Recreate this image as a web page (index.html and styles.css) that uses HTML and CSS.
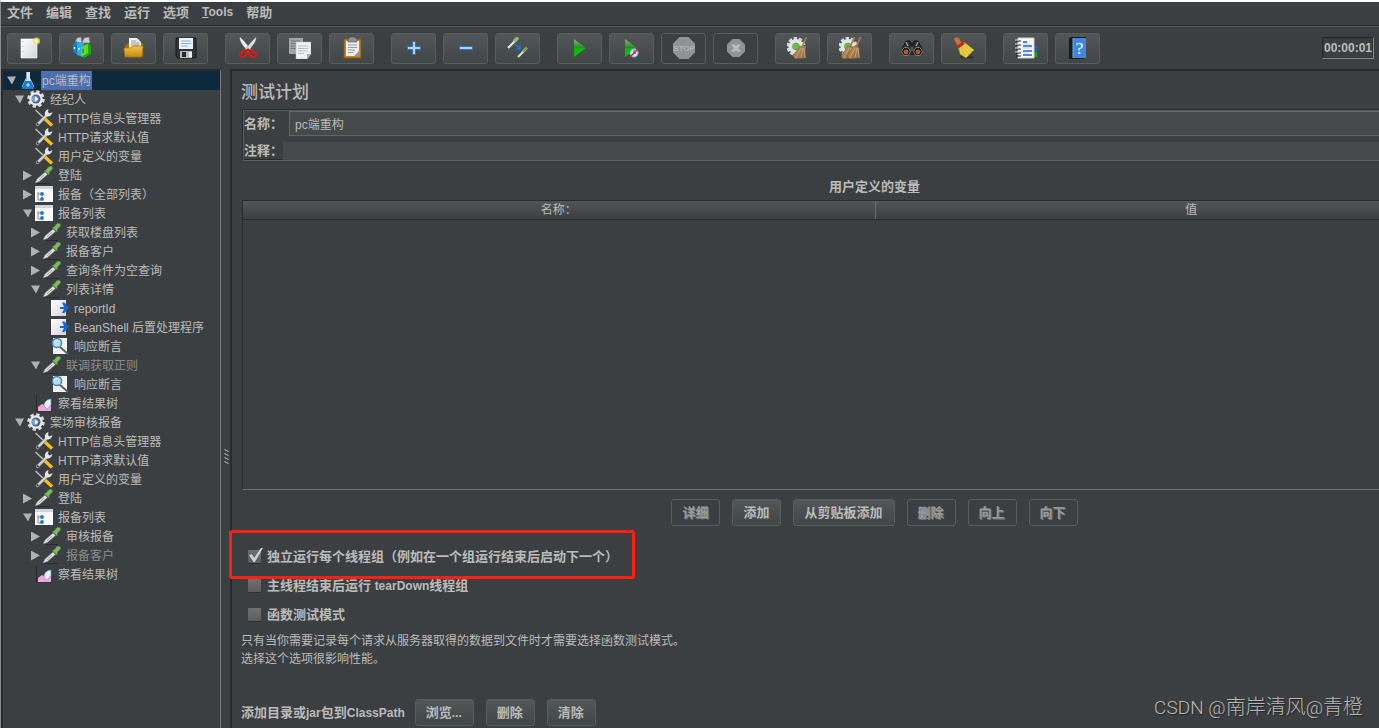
FILE: index.html
```html
<!DOCTYPE html>
<html lang="zh-CN">
<head>
<meta charset="utf-8">
<title>pc端重构</title>
<link rel="stylesheet" href="styles.css">
</head>
<body>
<svg class="defs" aria-hidden="true">
  <defs>
    <linearGradient id="gGreen" x1="0" y1="0" x2="0" y2="1"><stop offset="0" stop-color="#6cc468"/><stop offset=".48" stop-color="#2a8a2a"/><stop offset=".52" stop-color="#08b408"/><stop offset="1" stop-color="#05c805"/></linearGradient>
    <linearGradient id="gPaper" x1="0" y1="0" x2="1" y2="1"><stop offset="0" stop-color="#fff"/><stop offset="1" stop-color="#d4d4d4"/></linearGradient>
    <linearGradient id="gFolder" x1="0" y1="0" x2="0" y2="1"><stop offset="0" stop-color="#f3c04e"/><stop offset="1" stop-color="#c98b0c"/></linearGradient>
    <linearGradient id="gBroom" x1="0" y1="0" x2="1" y2="1"><stop offset="0" stop-color="#c39a6a"/><stop offset="1" stop-color="#8a6236"/></linearGradient>

    <symbol id="t-new" viewBox="0 0 22 22"><path d="M2 2h16v19H2z" fill="url(#gPaper)" stroke="#fff" stroke-width=".6"/><path d="M4 4v15" stroke="#bbb" stroke-dasharray="1 4"/><circle cx="17.500" cy="4" r="3.500" fill="#f4e56a" opacity=".8"/><circle cx="17.500" cy="4" r="1.400" fill="#fffbd0"/></symbol>
    <symbol id="t-templates" viewBox="0 0 22 22"><path d="M4 5l2-4 4-1 1 6zM11 6l2-5 5-1 1 6z" fill="#c9cdd0" stroke="#777" stroke-width=".6"/><path d="M2 6l4-2v14l-4-3z" fill="#0d7fc0"/><path d="M6 5l7 1v14l-7-2z" fill="#2ba9ea"/><path d="M3.500 10v2M8 11v2" stroke="#e4f6ff" stroke-width="1.500"/><path d="M10 10l7-4 3 3v8l-7 4-3-2z" fill="#23a512"/><path d="M10 10l7-3v9l-7 4z" fill="#5cdb2b"/><path d="M12 12v4" stroke="#137a0a"/></symbol>
    <symbol id="t-open" viewBox="0 0 22 22"><path d="M2 9l3-3h15v13H2z" fill="#a56f08"/><path d="M6 1h8l4 4v10H6z" fill="url(#gPaper)"/><path d="M8 4h5M8 6h8M8 8h8" stroke="#888" stroke-width=".8"/><path d="M1 11h6l3-2h10l-1 11H2z" fill="url(#gFolder)" stroke="#a97208" stroke-width=".7"/></symbol>
    <symbol id="t-save" viewBox="0 0 22 22"><path d="M1 1h20v20H3l-2-2z" fill="#30343a" stroke="#161719"/><path d="M4 1h14v11H4z" fill="#eaf3fc"/><path d="M6 4h10M6 6.500h10M6 9h7" stroke="#8eb0d4"/><path d="M5 14h12v7H5z" fill="#b9bcc0"/><path d="M7 15h4v5H7z" fill="#26282b"/><path d="M14 15h3v5h-3z" fill="#eee"/></symbol>
    <symbol id="t-cut" viewBox="0 0 22 22"><path d="M3 0c-1 5 4 9 8 15l3-2C11 8 7 4 3 0z" fill="#f2f2f2" stroke="#888" stroke-width=".5"/><path d="M19 0c1 5-4 9-8 15l-3-2c3-5 7-9 11-13z" fill="#dcdcdc" stroke="#777" stroke-width=".5"/><ellipse cx="6.500" cy="17" rx="3.800" ry="2.600" fill="none" stroke="#dc1919" stroke-width="2.200" transform="rotate(-35 6.500 17)"/><ellipse cx="15.500" cy="17" rx="3.800" ry="2.600" fill="none" stroke="#dc1919" stroke-width="2.200" transform="rotate(35 15.500 17)"/><path d="M8 14.500l3-2 3 2" stroke="#c31212" stroke-width="2" fill="none"/></symbol>
    <symbol id="t-copy" viewBox="0 0 22 22"><path d="M0 1h14v16H0z" fill="#a2a5a6"/><path d="M2 4h9M2 6.500h9M2 9h7M2 11.500h7" stroke="#777"/><path d="M7 5h15v12l-4 5H7z" fill="#f1f1f1" stroke="#bbb" stroke-width=".5"/><path d="M9 9h10M9 11.500h10M9 14h10M9 16.500h6" stroke="#bbb"/><path d="M22 17h-4v5z" fill="#aaa"/></symbol>
    <symbol id="t-paste" viewBox="0 0 22 22"><path d="M3 2h17v19H3z" fill="#cc8419" stroke="#8a520a"/><path d="M5 4h13v15H5z" fill="#eee"/><path d="M18 14l-5 5h5z" fill="#999"/><path d="M7 8h9M7 10.500h9M7 13h7M7 15.500h5" stroke="#999"/><path d="M7 2l3-2h3l3 2v3H7z" fill="#8c9092" stroke="#555" stroke-width=".6"/></symbol>
    <symbol id="t-plus" viewBox="0 0 22 22"><path d="M9.500 4.500h3v5h5v3h-5v5h-3v-5h-5v-3h5z" fill="#b3d4f6" stroke="#2f6fc5"/></symbol>
    <symbol id="t-minus" viewBox="0 0 22 22"><path d="M4.500 9.500h13v3h-13z" fill="#b3d4f6" stroke="#2f6fc5"/></symbol>
    <symbol id="t-toggle" viewBox="0 0 22 22"><path d="M1 11l8-8" stroke="#e4e8e2" stroke-width="2.200"/><path d="M7 4.500l4-4" stroke="#8cc46c" stroke-width="3.400"/><path d="M11 20l7-7" stroke="#d7dbd5" stroke-width="2.200"/><path d="M16 14.500l4-4" stroke="#74aa56" stroke-width="3"/><path d="M8 7l5 5m0-4v4H9" stroke="#2671d8" stroke-width="1.600" fill="none"/></symbol>
    <symbol id="t-start" viewBox="0 0 22 22"><path d="M5 2l12 9L5 20z" fill="url(#gGreen)"/></symbol>
    <symbol id="t-notimers" viewBox="0 0 22 22"><path d="M4 2l12 9-12 9z" fill="url(#gGreen)"/><circle cx="13" cy="16" r="4.200" fill="#dbe8f7" stroke="#5795d4"/><path d="M13 13v3h2" stroke="#355" fill="none"/><path d="M8.500 20.500l9-9" stroke="#d8201c" stroke-width="1.500"/></symbol>
    <symbol id="t-stop" viewBox="0 0 22 22"><path d="M6.500 0h9L22 6.500v9L15.500 22h-9L0 15.500v-9z" fill="#929292"/><text x="11" y="14" text-anchor="middle" class="stop-text">STOP</text></symbol>
    <symbol id="t-shutdown" viewBox="0 0 22 22"><path d="M7.500 2h7l5.500 5.500v7L14.500 20h-7L2 14.500v-7z" fill="#929292"/><path d="M7.500 7.500l7 7m0-7l-7 7" stroke="#bbb" stroke-width="3"/></symbol>
    <symbol id="gear-green" viewBox="0 0 22 22"><circle cx="10" cy="9.500" r="8.200" fill="none" stroke="#d8d9d9" stroke-width="2.800" stroke-dasharray="3.400 1.750"/><circle cx="10" cy="9.500" r="7.600" fill="#e3e4e4"/><circle cx="10" cy="9.500" r="3.400" fill="#68c135" stroke="#89908a"/></symbol>
    <symbol id="broom" viewBox="0 0 22 22"><path d="M19.500 0l-4 9" stroke="#a37b4e" stroke-width="1.700"/><path d="M13 9l5 1 1 11-11 1-2-3z" fill="url(#gBroom)" stroke="#735029" stroke-width=".5"/><path d="M14 11l-5 10M16 11l-2 10M17 11l1 10" stroke="#dfbd8c" stroke-width=".6"/></symbol>
    <symbol id="t-clear" viewBox="0 0 22 22"><use href="#gear-green" x="-1" width="22" height="22"/><use href="#broom" width="22" height="22"/></symbol>
    <symbol id="t-clearall" viewBox="0 0 22 22"><use href="#gear-green" x="-1" width="22" height="22"/><use href="#broom" x="-4" width="22" height="22"/><use href="#broom" x="2" width="22" height="22"/></symbol>
    <symbol id="t-search" viewBox="0 0 22 22"><path d="M5 4h4l2 4 2-4h4l4 8v5H1v-5z" fill="#292b2c" stroke="#111"/><path d="M5 5l2 4M17 5l-2 4" stroke="#a5a7a8" stroke-width="1.300"/><circle cx="5" cy="14.500" r="4.200" fill="#191919" stroke="#888"/><circle cx="17" cy="14.500" r="4.200" fill="#191919" stroke="#888"/><circle cx="5" cy="15" r="2.400" fill="#ad5b26"/><circle cx="17" cy="15" r="2.400" fill="#ad5b26"/><path d="M9.500 10h3v4h-3z" fill="#555"/></symbol>
    <symbol id="t-reset" viewBox="0 0 22 22"><ellipse cx="14" cy="20" rx="7" ry="1.800" fill="#272a2a" opacity=".7"/><path d="M1 2l2-2 3 1 3 5-4 3-3-4z" fill="#b77a3a" stroke="#805020" stroke-width=".5"/><path d="M5 9l6-4 10 8-8 8-6-4z" fill="#ecd044" stroke="#a98812" stroke-width=".6"/><path d="M8 11l4 8M10 10l6 8M12 9l7 6" stroke="#c3a82c" stroke-width=".7"/><path d="M3.500 9.500l6-5 2.500 2-6 5z" fill="#cf2424"/></symbol>
    <symbol id="t-fn" viewBox="0 0 22 22"><path d="M18 9h4v5h-4z" fill="#1a67ca"/><path d="M18 15h4v5h-4z" fill="#1ba31b"/><path d="M3 1h16v20H3z" fill="#fafafa" stroke="#ccc"/><path d="M1 4h5M1 8h5M1 12h5M1 16h5M1 19h5" stroke="#111"/><path d="M0 3h4M0 7h4M0 11h4M0 15h4" stroke="#ddd"/><path d="M8 5h4M8 9h9M8 14h9M8 18h9" stroke="#2563b9" stroke-width="1.300"/><path d="M8 7h7M8 11h9M8 16h6" stroke="#b9cfeb"/></symbol>
    <symbol id="t-help" viewBox="0 0 22 22"><path d="M2 1l3-1h14v20l-3 2H2z" fill="#17191b"/><path d="M6 1h13v20H6z" fill="#4287de"/><path d="M6 1v20" stroke="#72a9ed"/><text x="12.500" y="17" text-anchor="middle" class="help-text">?</text></symbol>

    <symbol id="i-plan" viewBox="0 0 18 18"><path d="M7 1h4v6l4 8v3H3v-3l4-8z" fill="#dbe5ee"/><path d="M7 1h1v7l-3 6H4l3-7z" fill="#96a8b5"/><path d="M6 10h6l3 6v2H3v-2z" fill="#1779d1"/><circle cx="9" cy="14" r="1.700" fill="#9ed4fb"/></symbol>
    <symbol id="i-group" viewBox="0 0 18 18"><circle cx="9" cy="9" r="7.300" fill="none" stroke="#d9d9d9" stroke-width="3" stroke-dasharray="3.300 2.430"/><circle cx="9" cy="9" r="6.800" fill="#e9e9e9"/><circle cx="9" cy="9" r="4.500" fill="#446797"/><circle cx="8" cy="9" r="3" fill="#84a6d1"/><path d="M8 6.500l3.500 2.500L8 11.500z" fill="#fff"/></symbol>
    <symbol id="i-config" viewBox="0 0 18 18"><path d="M.5 1l9 8.500" stroke="#bfc1c1" stroke-width="1.400"/><path d="M2.500 15.500L12 6" stroke="#77797a" stroke-width="3.600" stroke-linecap="round"/><path d="M2.500 15.500L13 5" stroke="#d5d7d7" stroke-width="2" stroke-linecap="round"/><path d="M13.500 0c-3 1-4.500 4-3 6.500 2 2 6 1 7-3.500l-3 1.500L13 3z" fill="#e3e4e4"/><path d="M10 10l7 6.500" stroke="#f5bd1c" stroke-width="3.200"/><circle cx="2.800" cy="15.200" r="1" fill="#333"/></symbol>
    <symbol id="i-sampler" viewBox="0 0 18 18"><path d="M2 17.500h13" stroke="#292b2c"/><path d="M0 17l2-4 8-7 2.500 2.500-8 7z" fill="#dcdfdb" stroke="#777d74" stroke-width=".5"/><path d="M4 14l5-5" stroke="#969b93" stroke-width=".8"/><path d="M9 4.500l2-.5 2-2.500c2-2.500 6.500-1 4 2L14.500 6l-.5 3z" fill="#7abb60" stroke="#467d35" stroke-width=".5"/></symbol>
    <symbol id="i-controller" viewBox="0 0 18 18"><path d="M0 1h18v16H0z" fill="#fafafa"/><path d="M0 1h18v3H0z" fill="#cfd5db"/><path d="M3 7v8h3M3 9h3" stroke="#778596" fill="none"/><circle cx="7" cy="9" r="1.900" fill="#2970be"/><circle cx="7" cy="14" r="1.900" fill="#2970be"/></symbol>
    <symbol id="i-post" viewBox="0 0 18 18"><path d="M0 1h15v16H0z" fill="url(#gPaper)"/><path d="M9 8h4l-2-4.500h2.500L18 8.500 13.500 14H11l2-4H9z" fill="#1565cd"/></symbol>
    <symbol id="i-assert" viewBox="0 0 18 18"><path d="M2 1h14v16H2z" fill="#f1f3f4"/><path d="M9 10l8 7" stroke="#5c6266" stroke-width="2"/><circle cx="6" cy="6" r="4.600" fill="#b7ddf5" stroke="#4685ba" stroke-width="1.500"/><path d="M3.500 6c0-2 1.500-2.500 3-2.500" stroke="#eefaff" fill="none"/></symbol>
    <symbol id="i-listener" viewBox="0 0 18 18"><path d="M1.500 1v16H17" stroke="#27292a" fill="none"/><path d="M3 17v-4l4-3 4 2 5-2v7z" fill="#f3a6de"/><path d="M9 12c0-4 3-7 7-7v6c-2 0-2 4-4 4z" fill="#e8f0fa" stroke="#5f91cf" stroke-width=".6"/></symbol>
  </defs>
</svg>

<nav class="menu">
  <button>文件</button><button>编辑</button><button>查找</button><button>运行</button><button>选项</button><button class="latin"><u>T</u>ools</button><button>帮助</button>
</nav>

<header class="toolbar">
  <div class="group">
    <button aria-label="新建"><svg><use href="#t-new"/></svg></button>
    <button aria-label="模板"><svg><use href="#t-templates"/></svg></button>
    <button aria-label="打开"><svg><use href="#t-open"/></svg></button>
    <button aria-label="保存"><svg><use href="#t-save"/></svg></button>
  </div>
  <div class="group">
    <button aria-label="剪切"><svg><use href="#t-cut"/></svg></button>
    <button aria-label="复制"><svg><use href="#t-copy"/></svg></button>
    <button aria-label="粘贴"><svg><use href="#t-paste"/></svg></button>
  </div>
  <div class="group">
    <button aria-label="展开"><svg><use href="#t-plus"/></svg></button>
    <button aria-label="折叠"><svg><use href="#t-minus"/></svg></button>
    <button aria-label="切换"><svg><use href="#t-toggle"/></svg></button>
  </div>
  <div class="group">
    <button aria-label="启动"><svg><use href="#t-start"/></svg></button>
    <button aria-label="不停顿开始"><svg><use href="#t-notimers"/></svg></button>
    <button aria-label="停止" disabled><svg><use href="#t-stop"/></svg></button>
    <button aria-label="关闭" disabled><svg><use href="#t-shutdown"/></svg></button>
  </div>
  <div class="group">
    <button aria-label="清除"><svg><use href="#t-clear"/></svg></button>
    <button aria-label="清除全部"><svg><use href="#t-clearall"/></svg></button>
  </div>
  <div class="group">
    <button aria-label="查找"><svg><use href="#t-search"/></svg></button>
    <button aria-label="重置搜索"><svg><use href="#t-reset"/></svg></button>
  </div>
  <div class="group">
    <button aria-label="函数助手"><svg><use href="#t-fn"/></svg></button>
    <button aria-label="帮助"><svg><use href="#t-help"/></svg></button>
  </div>
  <output class="timer">00:00:01</output>
</header>

<div class="workspace">
  <aside class="sidebar">
    <ul class="tree">
      <li><div class="row selected"><i class="arrow open"></i><svg><use href="#i-plan"/></svg><span>pc端重构</span></div>
        <ul>
          <li><div class="row"><i class="arrow open"></i><svg><use href="#i-group"/></svg><span>经纪人</span></div>
            <ul>
              <li><div class="row"><i class="arrow leaf"></i><svg><use href="#i-config"/></svg><span>HTTP信息头管理器</span></div></li>
              <li><div class="row"><i class="arrow leaf"></i><svg><use href="#i-config"/></svg><span>HTTP请求默认值</span></div></li>
              <li><div class="row"><i class="arrow leaf"></i><svg><use href="#i-config"/></svg><span>用户定义的变量</span></div></li>
              <li><div class="row"><i class="arrow"></i><svg><use href="#i-sampler"/></svg><span>登陆</span></div></li>
              <li><div class="row"><i class="arrow"></i><svg><use href="#i-controller"/></svg><span>报备（全部列表）</span></div></li>
              <li><div class="row"><i class="arrow open"></i><svg><use href="#i-controller"/></svg><span>报备列表</span></div>
                <ul>
                  <li><div class="row"><i class="arrow"></i><svg><use href="#i-sampler"/></svg><span>获取楼盘列表</span></div></li>
                  <li><div class="row"><i class="arrow"></i><svg><use href="#i-sampler"/></svg><span>报备客户</span></div></li>
                  <li><div class="row"><i class="arrow"></i><svg><use href="#i-sampler"/></svg><span>查询条件为空查询</span></div></li>
                  <li><div class="row"><i class="arrow open"></i><svg><use href="#i-sampler"/></svg><span>列表详情</span></div>
                    <ul>
                      <li><div class="row"><i class="arrow leaf"></i><svg><use href="#i-post"/></svg><span>reportId</span></div></li>
                      <li><div class="row"><i class="arrow leaf"></i><svg><use href="#i-post"/></svg><span>BeanShell 后置处理程序</span></div></li>
                      <li><div class="row"><i class="arrow leaf"></i><svg><use href="#i-assert"/></svg><span>响应断言</span></div></li>
                    </ul>
                  </li>
                  <li><div class="row off"><i class="arrow open"></i><svg><use href="#i-sampler"/></svg><span>联调获取正则</span></div>
                    <ul>
                      <li><div class="row"><i class="arrow leaf"></i><svg><use href="#i-assert"/></svg><span>响应断言</span></div></li>
                    </ul>
                  </li>
                </ul>
              </li>
              <li><div class="row"><i class="arrow leaf"></i><svg><use href="#i-listener"/></svg><span>察看结果树</span></div></li>
            </ul>
          </li>
          <li><div class="row"><i class="arrow open"></i><svg><use href="#i-group"/></svg><span>案场审核报备</span></div>
            <ul>
              <li><div class="row"><i class="arrow leaf"></i><svg><use href="#i-config"/></svg><span>HTTP信息头管理器</span></div></li>
              <li><div class="row"><i class="arrow leaf"></i><svg><use href="#i-config"/></svg><span>HTTP请求默认值</span></div></li>
              <li><div class="row"><i class="arrow leaf"></i><svg><use href="#i-config"/></svg><span>用户定义的变量</span></div></li>
              <li><div class="row"><i class="arrow"></i><svg><use href="#i-sampler"/></svg><span>登陆</span></div></li>
              <li><div class="row"><i class="arrow open"></i><svg><use href="#i-controller"/></svg><span>报备列表</span></div>
                <ul>
                  <li><div class="row"><i class="arrow"></i><svg><use href="#i-sampler"/></svg><span>审核报备</span></div></li>
                  <li><div class="row off"><i class="arrow"></i><svg><use href="#i-sampler"/></svg><span>报备客户</span></div></li>
                </ul>
              </li>
              <li><div class="row"><i class="arrow leaf"></i><svg><use href="#i-listener"/></svg><span>察看结果树</span></div></li>
            </ul>
          </li>
        </ul>
      </li>
    </ul>
  </aside>

  <div class="splitter"><svg class="grip" viewBox="0 0 5 16"><path d="M1 0v16M3 1v16" stroke="#d0d0d0" stroke-dasharray="1 3"/><path d="M2 1v15M4 2v14" stroke="#d0d0d0" stroke-dasharray="1 3"/></svg></div>

  <main class="content">
    <div class="plan">
      <h1>测试计划</h1>
      <section class="fields">
        <div class="field"><label for="name">名称：</label><input id="name" class="name" type="text" value="pc端重构"></div>
        <div class="field"><label for="note">注释：</label><input id="note" class="note" type="text"></div>
      </section>

      <h2>用户定义的变量</h2>
      <div class="grid">
        <table><thead><tr><th>名称：</th><th>值</th></tr></thead></table>
      </div>
      <div class="actions">
        <button class="btn" disabled>详细</button>
        <button class="btn">添加</button>
        <button class="btn">从剪贴板添加</button>
        <button class="btn" disabled>删除</button>
        <button class="btn" disabled>向上</button>
        <button class="btn" disabled>向下</button>
      </div>

      <div class="options">
        <div class="option marked"><label><input type="checkbox" checked>独立运行每个线程组（例如在一个组运行结束后启动下一个）</label></div>
        <div class="option"><label><input type="checkbox"><span>主线程结束后运行 <span class="latin">tearDown</span>线程组</span></label></div>
        <div class="option"><label><input type="checkbox">函数测试模式</label></div>
      </div>
      <p class="hint">只有当你需要记录每个请求从服务器取得的数据到文件时才需要选择函数测试模式。<br>选择这个选项很影响性能。</p>

      <div class="classpath">
        <span class="caption">添加目录或<span class="latin">jar</span>包到<span class="latin">ClassPath</span></span>
        <button class="btn">浏览<span class="latin">...</span></button>
        <button class="btn">删除</button>
        <button class="btn">清除</button>
      </div>
    </div>
  </main>
</div>
<div class="watermark"><span>CSDN @</span>南岸清风<span>@</span>青橙</div>
</body>
</html>
```
FILE: styles.css
```css
*, ::before, ::after { box-sizing: border-box; }

body {
  margin: 0;
  height: 100vh;
  display: flex;
  flex-direction: column;
  overflow: hidden;
  border-top: 2px solid #fff;
  border-left: 1px solid #8a8c8d;
  background: #3c3f41;
  color: #bbb;
  font: 12px/19px "Liberation Sans", "Noto Sans CJK SC", sans-serif;
}

button, input { font: inherit; color: inherit; }
.defs { position: absolute; width: 0; height: 0; }
.latin { font-size: 12px; }

.menu {
  display: flex;
  flex: none;
  align-items: flex-start;
  gap: 13px;
  height: 24px;
  padding-left: 6px;
  border-bottom: 1px solid #282a2b;
  font-size: 13px;
  font-weight: bold;
}
.menu button { padding: 0; border: 0; background: none; line-height: 21px; }
.menu .latin { font-size: 12px; }

.toolbar {
  display: flex;
  flex: none;
  align-items: center;
  gap: 17px;
  height: 43px;
  padding: 0 5px 0 6px;
  border-top: 1px solid #555758;
}
.group { display: flex; gap: 7px; }
.group button {
  display: flex;
  align-items: center;
  justify-content: center;
  width: 45px;
  height: 31px;
  padding: 0;
  border: 1px solid #5a5d5e;
  border-radius: 3px;
  background: linear-gradient(#525658, #414647);
}
.group button:disabled { background: none; }
.group svg { width: 22px; height: 22px; }
.stop-text { font: bold 8px "Liberation Sans", sans-serif; fill: #b4b4b4; }
.help-text { font: 17px "Liberation Serif", serif; fill: #fff; }
.timer {
  margin-left: auto;
  padding: 0 1px;
  border: 1px solid;
  border-color: #242627 #85888a #85888a #242627;
  outline: 1px solid #343738;
  outline-offset: -2px;
  font-weight: bold;
  line-height: 20px;
}

.workspace { display: flex; flex: 1; min-height: 0; }
.sidebar {
  flex: none;
  width: 220px;
  border: solid #282a2b;
  border-width: 2px 1px 0 2px;
  border-right: 1px solid #777;
  overflow: hidden;
}
.tree, .tree ul { margin: 0; padding: 0; list-style: none; }
.tree ul { padding-left: 8px; }
.row {
  display: flex;
  align-items: center;
  height: 19px;
  gap: 3px;
  padding-left: 3px;
  white-space: nowrap;
}
.row svg { flex: none; align-self: flex-start; width: 18px; height: 18px; }
.row span { margin-left: 1px; padding: 2px 1px 0; line-height: 17px; }
.row.selected { background: #0d293e; }
.row.selected span { background: #4b6eaf; }
.row.off span { color: #8c8c8c; }
.arrow { flex: none; width: 10px; height: 10px; background: #afb1b3; clip-path: polygon(1px 0, 10px 50%, 1px 100%); }
.arrow.open { clip-path: polygon(1px 1px, 10px 1px, 6px 9px); }
.arrow.leaf { visibility: hidden; }

.splitter { display: flex; flex: none; width: 9px; padding: 117px 0 0 1px; align-items: center; justify-content: center; }
.grip { width: 5px; height: 16px; }

.content {
  flex: 1;
  min-width: 0;
  border: solid #282a2b;
  border-width: 2px 0 0 2px;
  padding-left: 9px;
}
/* The form is wider than its viewport and runs on past the right edge. */
.plan { margin-right: -129px; }
h1 { margin: 0; padding-top: 5px; font-size: 17px; font-weight: 500; line-height: 33px; }
.fields {
  display: flex;
  flex-direction: column;
  gap: 6px;
  margin-left: 1px;
  padding: 1px 0 0 1px;
  border: 1px solid #282a2b;
  border-bottom-color: #5b5e5f;
  box-shadow: inset 1px 1px #5b5e5f, inset 0 -1px #282a2b;
}
.field { display: flex; align-items: center; font-size: 13px; font-weight: bold; }
.field label { line-height: 18px; }
.field input {
  flex: 1;
  min-width: 0;
  padding: 0 5px;
  border: 0;
  background: #45494a;
  font-size: 12px;
  font-weight: normal;
}
.field .name { height: 25px; margin-left: 6px; border: 1px solid #646464; }
.field .note { height: 18px; }

h2 { margin: 0; padding: 16px 0 3px; font-size: 13px; line-height: 20px; text-align: center; }
.grid { min-height: 290px; margin-left: 1px; border: 1px solid #282a2b; border-bottom-color: #6e7172; }
.grid table { width: 100%; border-collapse: collapse; table-layout: fixed; }
.grid th {
  height: 18px;
  padding: 2px 0 0;
  border-bottom: 1px solid #282a2b;
  background: linear-gradient(#525658, #3c3f41);
  font-weight: normal;
  line-height: 15px;
}
.grid th + th { border-left: 1px solid #6a6d6e; }

.btn {
  height: 27px;
  padding: 0 11px 0 10px;
  border: 1px solid #5a5d5e;
  border-radius: 3px;
  background: linear-gradient(#525658, #414647);
  font-size: 13px;
  font-weight: bold;
  line-height: 25px;
}
.btn:disabled { background: none; color: #999; text-shadow: 1px 1px #777; }
.actions { display: flex; justify-content: center; gap: 12px; margin-top: 9px; }

.options { margin-top: 16px; font-size: 13px; font-weight: bold; }
.option { position: relative; height: 29px; padding-left: 7px; }
.option label { display: inline-flex; align-items: center; gap: 6px; height: 29px; }
.option input {
  position: relative;
  appearance: none;
  width: 13px;
  height: 13px;
  margin: 0;
  border-radius: 1px;
  background: linear-gradient(#707070, #5c5c5c);
  box-shadow: 0 1px #2d2f30;
}
.option input:checked::before {
  content: "";
  position: absolute;
  inset: -2px -2px 1px 1px;
  background: #d0d0d0;
  clip-path: polygon(0 50%, 20% 44%, 38% 70%, 85% 0, 100% 0, 42% 100%, 32% 100%);
}
.marked::after {
  content: "";
  position: absolute;
  z-index: 1;
  top: -12px;
  left: -12px;
  width: 406px;
  height: 49px;
  border: 3px solid #ff2013;
  border-radius: 3px;
}
.hint { margin: 3px 0 31px; line-height: 18px; }
.classpath { display: flex; align-items: center; gap: 12px; }
.caption { margin-right: -2px; font-size: 13px; font-weight: bold; }

.watermark {
  position: absolute;
  right: 16px;
  bottom: 6px;
  color: #b8b9ba;
  font: 20px/28px "Noto Sans CJK SC", sans-serif;
  font-weight: 300;
  text-shadow: 1px 1px 1px #222;
}
.watermark span { font-family: Roboto, sans-serif; font-size: 19px; }
```
